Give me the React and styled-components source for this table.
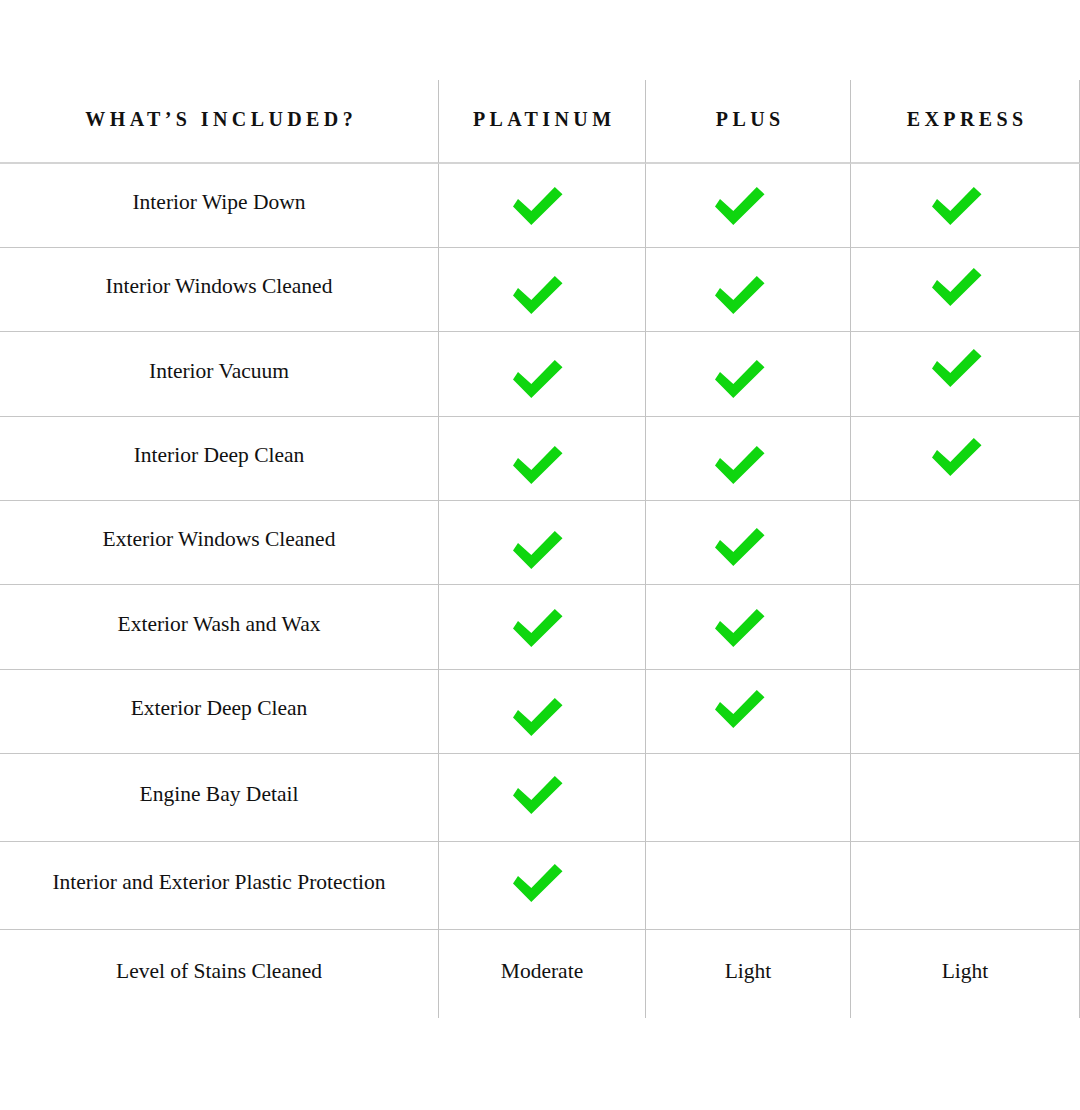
import React from "react";
import styled, { createGlobalStyle } from "styled-components";

const Global = createGlobalStyle`
  html, body { margin: 0; padding: 0; background: #ffffff; }
  body { font-family: "Liberation Serif", "Times New Roman", serif; color: #111; }
  * { box-sizing: border-box; }
`;

const Page = styled.div`
  width: 1080px;
  height: 1110px;
  padding-top: 80px;
  background: #fff;
`;

const Table = styled.div`
  display: grid;
  grid-template-columns: 438px 207px 205px 230px;
  width: 1080px;
`;

const Cell = styled.div`
  height: ${(p) => p.$h}px;
  display: flex;
  align-items: center;
  justify-content: center;
  border-left: ${(p) => (p.$col > 0 ? "1px solid #c2c2c2" : "none")};
  border-right: ${(p) => (p.$col === 3 ? "1px solid #c2c2c2" : "none")};
  border-bottom: ${(p) =>
    p.$last ? "none" : p.$head ? "2px solid #d4d4d4" : "1px solid #c6c6c6"};
`;

const HeadText = styled.span`
  font-family: "Liberation Serif", "Times New Roman", serif;
  font-weight: 700;
  font-size: 20px;
  letter-spacing: 4.4px;
  margin-right: -4.4px;
  color: #111;
  transform: translateY(-2px);
`;

const Label = styled.span`
  font-family: "Liberation Serif", "Times New Roman", serif;
  font-size: 21.5px;
  color: #111;
  transform: translateY(-3px);
`;

const CheckSvg = styled.svg`
  width: 50px;
  height: 38px;
  display: block;
`;

const Check = ({ dx = 0, dy = 0 }) => (
  <CheckSvg viewBox="0 0 50 38" style={{ transform: `translate(${dx}px, ${dy}px)` }}>
    <polygon points="5,12 0,19.5 18.3,38 49.5,7.3 41.8,0 18.3,24" fill="#0fd60f" />
  </CheckSvg>
);

const headers = ["WHAT’S INCLUDED?", "PLATINUM", "PLUS", "EXPRESS"];

// each mark: dy offset of check, or null for empty
const rows = [
  { label: "Interior Wipe Down", h: 84, marks: [0, 0, 0] },
  { label: "Interior Windows Cleaned", h: 84, marks: [5, 5, -3] },
  { label: "Interior Vacuum", h: 85, marks: [5, 5, -6] },
  { label: "Interior Deep Clean", h: 84, marks: [6, 6, -2] },
  { label: "Exterior Windows Cleaned", h: 84, marks: [7, 4, null] },
  { label: "Exterior Wash and Wax", h: 85, marks: [1, 1, null] },
  { label: "Exterior Deep Clean", h: 84, marks: [5, -3, null] },
  { label: "Engine Bay Detail", h: 88, marks: [-3, null, null] },
  { label: "Interior and Exterior Plastic Protection", h: 88, marks: [-3, null, null] },
];

const dxs = [-4, -8, -8];

export default function App() {
  return (
    <Page>
      <Global />
      <Table>
        {headers.map((t, i) => (
          <Cell key={t} $col={i} $h={84} $head>
            <HeadText>{t}</HeadText>
          </Cell>
        ))}
        {rows.map((r) => (
          <React.Fragment key={r.label}>
            <Cell $col={0} $h={r.h}>
              <Label>{r.label}</Label>
            </Cell>
            {r.marks.map((m, j) => (
              <Cell key={j} $col={j + 1} $h={r.h}>
                {m !== null && <Check dx={dxs[j]} dy={m} />}
              </Cell>
            ))}
          </React.Fragment>
        ))}
        {["Level of Stains Cleaned", "Moderate", "Light", "Light"].map((t, i) => (
          <Cell key={i} $col={i} $h={88} $last>
            <Label>{t}</Label>
          </Cell>
        ))}
      </Table>
    </Page>
  );
}
